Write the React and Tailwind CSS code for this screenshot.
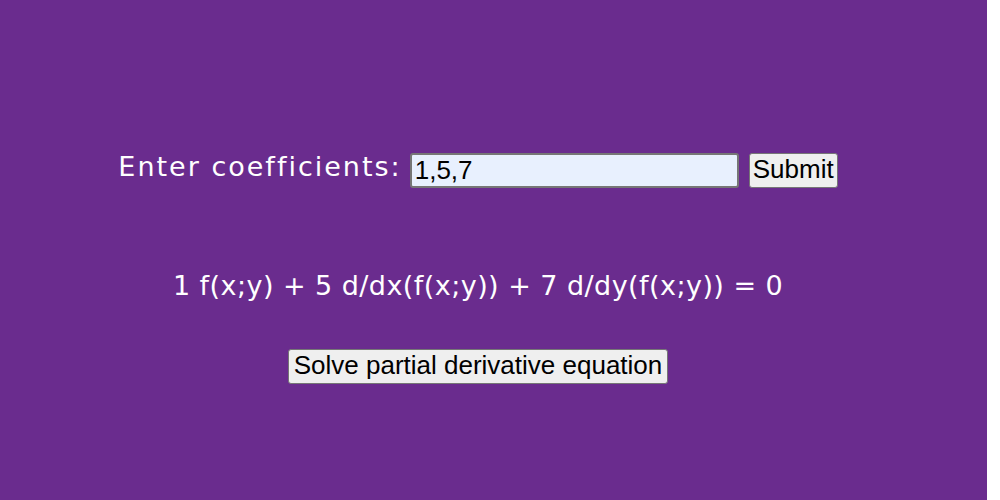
export default function App() {
  return (
    <div className="w-[987px] h-[500px] bg-[#6a2c8e] flex flex-col items-center pr-[31px] pt-[153px]">
      <div className="flex items-center h-[35px]">
        <span className="text-white text-[27px] leading-[30px] tracking-[2px] mb-[8px] font-['DejaVu_Sans',sans-serif]">
          Enter coefficients:
        </span>
        <input
          type="text"
          defaultValue="1,5,7"
          className="ml-[8px] w-[329px] h-[35px] bg-[#e8f0fe] border-2 border-[#767676] rounded-[3px] px-[3px] text-[26px] leading-[29px] text-black outline-none font-['Liberation_Sans',Arial,sans-serif]"
        />
        <button className="ml-[10px] h-[35px] bg-[#efefef] border border-[#767676] rounded-[3px] px-[3px] pb-[3px] text-[26px] leading-[29px] text-black font-['Liberation_Sans',Arial,sans-serif]">
          Submit
        </button>
      </div>
      <div className="mt-[83px] text-white text-[27px] leading-[30px] tracking-[0.45px] font-['DejaVu_Sans',sans-serif]">
        1 f(x;y) + 5 d/dx(f(x;y)) + 7 d/dy(f(x;y)) = 0
      </div>
      <button className="mt-[48px] h-[35px] bg-[#efefef] border border-[#767676] rounded-[3px] px-[5px] pb-[3px] text-[26px] leading-[29px] text-black font-['Liberation_Sans',Arial,sans-serif]">
        Solve partial derivative equation
      </button>
    </div>
  );
}
